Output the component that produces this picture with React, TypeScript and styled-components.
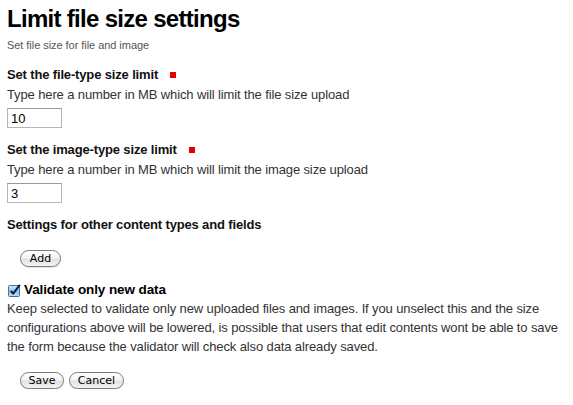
import React from "react";
import styled, { createGlobalStyle } from "styled-components";

const Global = createGlobalStyle`
  html, body { margin: 0; padding: 0; background: #fff; }
  body { font-family: "Liberation Sans", Arial, sans-serif; color: #222; }
`;

const Page = styled.form`
  padding: 5px 0 0 7px;
  width: 562px;
  display: flex;
  flex-direction: column;
  align-items: flex-start;
`;

const Title = styled.h1`
  margin: 0;
  font-size: 24px;
  line-height: 28px;
  font-weight: bold;
  letter-spacing: -0.7px;
  color: #000;
`;

const Subtitle = styled.p`
  margin: 5px 0 0;
  font-size: 11px;
  line-height: 14px;
  color: #555;
  letter-spacing: -0.05px;
`;

const Field = styled.div<{ $top: number }>`
  margin-top: ${(p) => p.$top}px;
  display: flex;
  flex-direction: column;
  align-items: flex-start;
`;

const Label = styled.label`
  font-size: 13px;
  line-height: 16px;
  font-weight: bold;
  letter-spacing: -0.15px;
  color: #111;
  display: flex;
  align-items: center;
`;

const Required = styled.span`
  display: inline-block;
  width: 6px;
  height: 6px;
  background: #e80000;
  margin-left: 12px;
`;

const Description = styled.div`
  margin-top: 4px;
  font-size: 13px;
  line-height: 16px;
  letter-spacing: -0.12px;
  color: #333;
`;

const TextInput = styled.input`
  margin-top: 5px;
  box-sizing: border-box;
  width: 55px;
  height: 20px;
  border: 1px solid #b5b5b5;
  border-top-color: #9a9a9a;
  padding: 0 3px;
  font-family: "Liberation Sans", Arial, sans-serif;
  font-size: 13px;
  color: #000;
  outline: none;
`;

const Pill = styled.button<{ $w: number }>`
  box-sizing: border-box;
  width: ${(p) => p.$w}px;
  height: 17px;
  padding: 0;
  border: 1px solid #7b7b7b;
  border-radius: 9px;
  background: linear-gradient(#ffffff 0%, #f4f4f4 45%, #e2e2e2 55%, #f3f3f3 100%);
  font-family: "DejaVu Sans", "Lucida Grande", sans-serif;
  font-size: 11px;
  line-height: 15px;
  color: #000;
  box-shadow: 0 1px 1px rgba(0, 0, 0, 0.12);
`;

const AddRow = styled.div`
  margin-top: 15px;
  padding-left: 13px;
`;

const CheckRow = styled.label`
  margin-top: 15px;
  display: flex;
  align-items: center;
  gap: 3px;
  font-size: 13.5px;
  line-height: 16px;
  font-weight: bold;
  letter-spacing: -0.1px;
  color: #000;
  padding-left: 1px;
`;

const Box = styled.span`
  display: inline-flex;
  width: 13px;
  height: 13px;
`;

const Help = styled.p`
  margin: 1px 0 0;
  font-size: 13px;
  line-height: 19px;
  letter-spacing: -0.12px;
  color: #333;
  width: 562px;
`;

const Actions = styled.div`
  margin-top: 16px;
  padding-left: 13px;
  display: flex;
  gap: 5px;
`;

const CheckIcon = () => (
  <svg width="13" height="13" viewBox="0 0 13 13">
    <defs>
      <linearGradient id="cbg" x1="0" y1="0" x2="0" y2="1">
        <stop offset="0" stopColor="#d9ecfb" />
        <stop offset="0.5" stopColor="#8dc3ef" />
        <stop offset="1" stopColor="#b9dcf7" />
      </linearGradient>
    </defs>
    <rect x="0.5" y="1.5" width="11" height="11" rx="1" fill="url(#cbg)" stroke="#4a6f96" />
    <path d="M2.8 6.8 L5.2 9.6 L11.8 0.8" fill="none" stroke="#0b1e3d" strokeWidth="2" strokeLinejoin="round" />
  </svg>
);

export default function App() {
  return (
    <>
      <Global />
      <Page onSubmit={(e) => e.preventDefault()}>
        <Title>Limit file size settings</Title>
        <Subtitle>Set file size for file and image</Subtitle>

        <Field $top={15}>
          <Label>
            Set the file-type size limit
            <Required />
          </Label>
          <Description>Type here a number in MB which will limit the file size upload</Description>
          <TextInput defaultValue="10" />
        </Field>

        <Field $top={14}>
          <Label>
            Set the image-type size limit
            <Required />
          </Label>
          <Description>Type here a number in MB which will limit the image size upload</Description>
          <TextInput defaultValue="3" />
        </Field>

        <Field $top={14}>
          <Label>Settings for other content types and fields</Label>
        </Field>

        <AddRow>
          <Pill type="button" $w={41}>Add</Pill>
        </AddRow>

        <CheckRow>
          <Box>
            <CheckIcon />
          </Box>
          Validate only new data
        </CheckRow>
        <Help>
          Keep selected to validate only new uploaded files and images. If you unselect this and the size
          configurations above will be lowered, is possible that users that edit contents wont be able to save
          the form because the validator will check also data already saved.
        </Help>

        <Actions>
          <Pill type="submit" $w={44}>Save</Pill>
          <Pill type="button" $w={55}>Cancel</Pill>
        </Actions>
      </Page>
    </>
  );
}
